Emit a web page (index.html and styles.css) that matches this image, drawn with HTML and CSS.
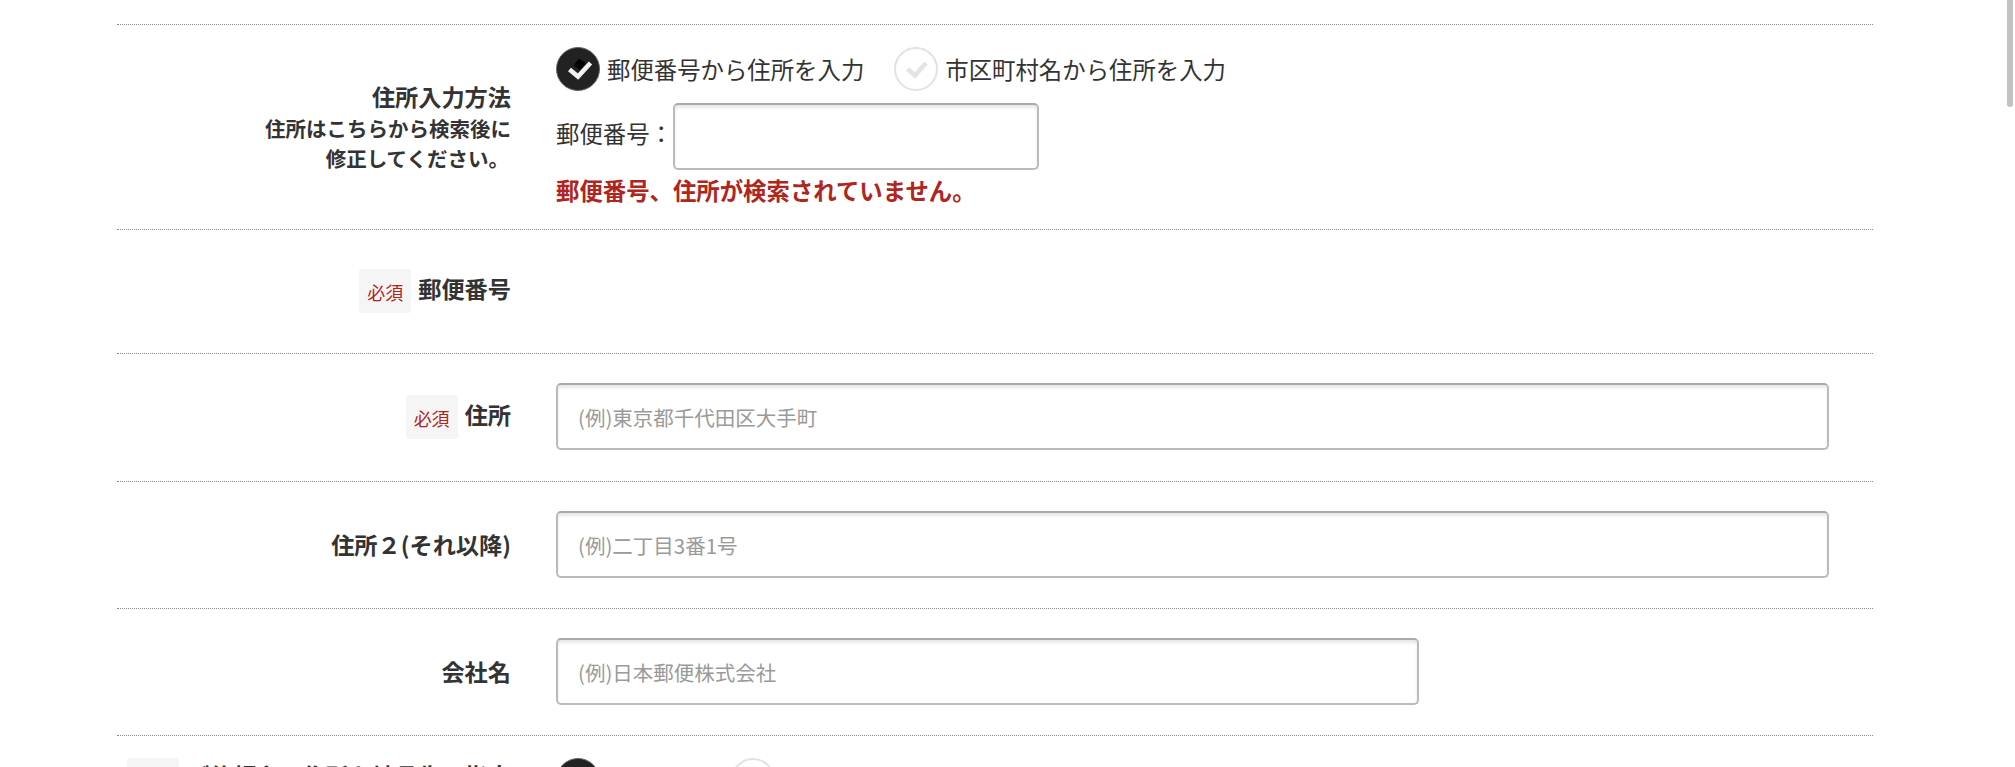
FILE: index.html
```html
<!DOCTYPE html>
<html lang="ja">

<head>
    <meta charset="UTF-8">
    <meta name="viewport" content="width=device-width, initial-scale=1.0">
    <title>住所入力</title>
    <link rel="stylesheet" href="styles.css">
</head>

<body>
    <form class="formulario" action="#" method="post">
        <div class="fila fila-metodo">
            <div class="etiqueta">
                <span class="titulo">住所入力方法</span>
                <span class="nota">住所はこちらから検索後に</span>
                <span class="nota nota-fin">修正してください。</span>
            </div>
            <div class="campo campo-metodo">
                <div class="radios">
                    <label class="radio">
                        <svg class="marca" viewBox="0 0 44 44">
                            <circle cx="22" cy="22" r="21.5" fill="#222" stroke="#666" stroke-width="1"/>
                            <path d="M23 11.5 L30 16 L24 23 L17.5 18.5 Z" fill="#000"/>
                            <path d="M13.5 22.5 L22 29.5 L34.5 16" fill="none" stroke="#f2f2f2" stroke-width="4.6"/>
                        </svg>
                        郵便番号から住所を入力
                    </label>
                    <label class="radio">
                        <svg class="marca" viewBox="0 0 44 44">
                            <circle cx="22" cy="22" r="21" fill="#fff" stroke="#e2e2e2" stroke-width="2"/>
                            <path d="M13.5 22 L21 28.5 L32 16" fill="none" stroke="#e4e4e4" stroke-width="4.5"/>
                        </svg>
                        市区町村名から住所を入力
                    </label>
                </div>
                <div class="postal">
                    <label for="postal" class="postal-texto">郵便番号：</label>
                    <input type="text" id="postal" class="caja caja-postal">
                </div>
                <p class="error">郵便番号、住所が検索されていません。</p>
            </div>
        </div>

        <div class="fila fila-codigo">
            <div class="etiqueta etiqueta-linea">
                <span class="requerido">必須</span>
                <span class="titulo">郵便番号</span>
            </div>
        </div>

        <div class="fila fila-direccion">
            <div class="etiqueta etiqueta-linea">
                <span class="requerido">必須</span>
                <span class="titulo">住所</span>
            </div>
            <div class="campo">
                <input type="text" class="caja" placeholder="(例)東京都千代田区大手町">
            </div>
        </div>

        <div class="fila">
            <div class="etiqueta">
                <span class="titulo">住所２(それ以降)</span>
            </div>
            <div class="campo">
                <input type="text" class="caja" placeholder="(例)二丁目3番1号">
            </div>
        </div>

        <div class="fila">
            <div class="etiqueta">
                <span class="titulo">会社名</span>
            </div>
            <div class="campo">
                <input type="text" class="caja caja-media" placeholder="(例)日本郵便株式会社">
            </div>
        </div>

        <div class="fila fila-ultima">
            <div class="etiqueta etiqueta-linea">
                <span class="requerido">必須</span>
                <span class="titulo">ご依頼主の住所を納品先に指定</span>
            </div>
            <div class="campo radios">
                <label class="radio">
                    <svg class="marca" viewBox="0 0 44 44">
                        <circle cx="22" cy="22" r="21.5" fill="#222" stroke="#666" stroke-width="1"/>
                    </svg>
                    指定する
                </label>
                <label class="radio">
                    <svg class="marca" viewBox="0 0 44 44">
                        <circle cx="22" cy="22" r="21" fill="#fff" stroke="#e2e2e2" stroke-width="2"/>
                    </svg>
                    指定しない
                </label>
            </div>
        </div>
    </form>
    <div class="scroll"></div>
</body>

</html>
```

FILE: styles.css
```css
html, body {
    height: 100%;
}

body {
    margin: 0;
    position: relative;
    overflow: hidden;
    background-color: white;
    color: #333;
    font-family: "Noto Sans CJK JP", "Noto Sans", sans-serif;
    font-size: 23.4px;
}

.formulario {
    margin: 24px 142px 0 117px;
}

.fila {
    display: flex;
    align-items: center;
    border-top: 1px dotted #888;
    padding: 29px 0 30px;
}

.fila-metodo {
    padding: 0;
    height: 204px;
}

.fila-codigo {
    height: 64px;
}

.fila-direccion {
    padding-bottom: 31px;
}

.fila-ultima {
    align-items: flex-start;
    padding-top: 22px;
}

.etiqueta {
    width: 394px;
    flex-shrink: 0;
    margin-right: 45px;
    display: flex;
    flex-direction: column;
    align-items: flex-end;
    line-height: 30px;
}

.etiqueta-linea {
    flex-direction: row;
    justify-content: flex-end;
    align-items: center;
}

.titulo {
    font-size: 23.2px;
    font-weight: bold;
    white-space: nowrap;
    margin-bottom: 2px;
}

.nota {
    font-size: 20.5px;
    font-weight: bold;
}

.nota-fin {
    margin-right: 2px;
}

.requerido {
    width: 52px;
    height: 44px;
    margin-right: 7px;
    border-radius: 3px;
    background-color: #f5f5f5;
    color: #b0251d;
    font-size: 18px;
    line-height: 46px;
    text-align: center;
}

.etiqueta-linea .titulo {
    margin-bottom: 6px;
}

.fila-ultima .etiqueta-linea .titulo {
    margin-bottom: 10px;
}

.campo {
    flex: 1;
}

.campo-metodo {
    align-self: flex-start;
    padding-top: 22px;
}

.radios {
    display: flex;
}

.radio {
    display: flex;
    align-items: center;
    margin-right: 30px;
    line-height: 44px;
}

.marca {
    width: 44px;
    height: 44px;
    margin-right: 7px;
}

.postal {
    display: flex;
    align-items: center;
    margin-top: 12px;
}

.postal-texto {
    margin-bottom: 8px;
}

.caja {
    display: block;
    box-sizing: border-box;
    width: 1273px;
    height: 67px;
    padding: 0 20px;
    border: 2px solid #bbb;
    border-top-color: #aaa;
    border-radius: 5px;
    box-shadow: inset 0 3px 3px rgba(0, 0, 0, 0.09);
    background-color: white;
    font-family: inherit;
    font-size: 20.5px;
}

.caja::placeholder {
    color: #9a9a9a;
}

.caja-postal {
    width: 366px;
    height: 67px;
}

.caja-media {
    width: 863px;
}

.error {
    margin: 3px 0 0;
    color: #b0251d;
    font-weight: bold;
    line-height: 34px;
}

.scroll {
    position: absolute;
    top: 0;
    right: 2px;
    width: 6px;
    height: 107px;
    border-radius: 0 0 3px 3px;
    background-color: #c1c1c1;
}
```
